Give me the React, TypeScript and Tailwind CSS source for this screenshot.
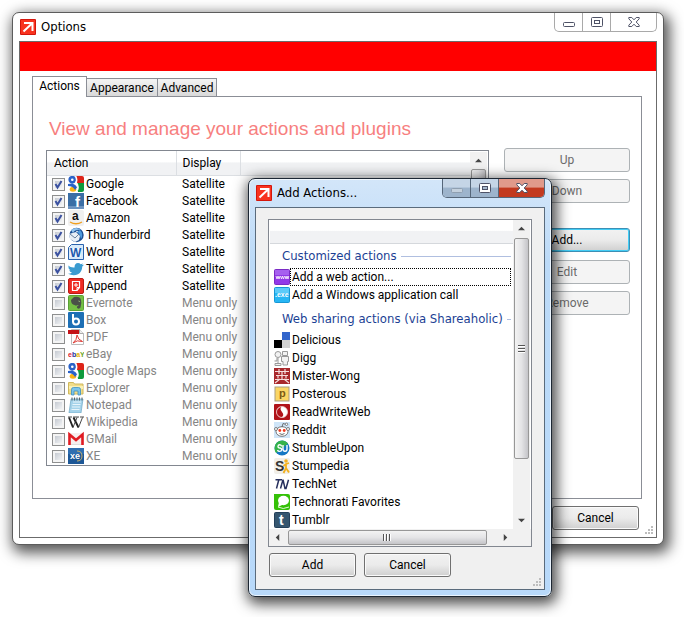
import type { ReactNode } from "react";
import clsx from "clsx";

type Action = { name: string; display: string; on?: boolean };

const ACTIONS: Action[] = [
  { name: "Google", display: "Satellite", on: true },
  { name: "Facebook", display: "Satellite", on: true },
  { name: "Amazon", display: "Satellite", on: true },
  { name: "Thunderbird", display: "Satellite", on: true },
  { name: "Word", display: "Satellite", on: true },
  { name: "Twitter", display: "Satellite", on: true },
  { name: "Append", display: "Satellite", on: true },
  { name: "Evernote", display: "Menu only" },
  { name: "Box", display: "Menu only" },
  { name: "PDF", display: "Menu only" },
  { name: "eBay", display: "Menu only" },
  { name: "Google Maps", display: "Menu only" },
  { name: "Explorer", display: "Menu only" },
  { name: "Notepad", display: "Menu only" },
  { name: "Wikipedia", display: "Menu only" },
  { name: "GMail", display: "Menu only" },
  { name: "XE", display: "Menu only" }
];

const CUSTOM = ["Add a web action...", "Add a Windows application call"];

const SHARING = [
  "Delicious",
  "Digg",
  "Mister-Wong",
  "Posterous",
  "ReadWriteWeb",
  "Reddit",
  "StumbleUpon",
  "Stumpedia",
  "TechNet",
  "Technorati Favorites",
  "Tumblr"
];

const sans = "Liberation Sans, Arial, sans-serif";

const googleIcon = (
  <>
    <path d="M7 0h7q2 0 2 2v5H9z" fill="#dd2419" />
    <path d="M9 7h7v7q0 2-2 2h-4z" fill="#0e9a3c" />
    <ellipse cx="5" cy="13.300" rx="3.300" ry="2.500" fill="#fbb516" />
    <circle cx="4.300" cy="3.800" r="2.600" fill="#fff" stroke="#2a62c8" strokeWidth="2.600" />
    <path d="M7.500 0q2 4 .5 6.500 3 2.500 1.500 7.500" fill="none" stroke="#fff" strokeWidth="1.600" />
    <path d="M0 8l4-.5q4 1 5 4L7 14Q5 10 0 10z" fill="#2a62c8" />
  </>
);

const ICONS: Record<string, ReactNode> = {
  Google: googleIcon,
  Facebook: (
    <>
      <rect width="16" height="16" fill="#3b6ea5" />
      <path d="M0 13h16v3H0z" fill="#6d93c0" />
      <text x="7" y="14" fontSize="15" fontWeight="bold" fontFamily={sans} fill="#fff">f</text>
    </>
  ),
  Amazon: (
    <>
      <rect width="16" height="16" rx="2" fill="#f0f0f0" />
      <text x="4" y="10" fontSize="12" fontWeight="bold" fontFamily={sans} fill="#111">a</text>
      <path d="M2 12q6 3.500 12 0" fill="none" stroke="#f0a020" strokeWidth="1.300" />
    </>
  ),
  Thunderbird: (
    <>
      <circle cx="8.500" cy="8" r="7.200" fill="#1c4f94" />
      <path d="M3 3q5-4 10 0-6-1-8 3z" fill="#8fc3ee" />
      <path d="M12 3q4 4 1 9-1-5-4-7z" fill="#4f9bdd" />
      <path d="M1 7l7-2 4 4-1 4-4 2-5-3z" fill="#e8eef5" />
      <path d="M2 7l5 4 4-4" fill="none" stroke="#69809b" />
      <circle cx="9" cy="4.500" r=".8" fill="#fff" />
    </>
  ),
  Word: (
    <>
      <path d="M3.500.5h12v15H.5v-12z" fill="#d8eafa" stroke="#2a62ad" />
      <path d="M2 4h11v9H2z" fill="#fff" opacity=".6" />
      <text x="2" y="13" fontSize="12" fontWeight="bold" fontFamily={sans} fill="#1e5bae">W</text>
    </>
  ),
  Twitter: (
    <path
      d="M0 4.500q3 2.500 6.500 2 0-4.500 3.500-4.500 1.700 0 2.700 1.200L15 2.500 14 4l2-.3-1.700 1.800Q14 11 10 13.300q-5 2-10-.6 2.500 0 4-1.200-2.200-.4-2.800-2.200h1.300Q.5 8.500.3 6l1.200.4Q0 5.500 0 4.500z"
      fill="#3a9bd0"
    />
  ),
  Append: (
    <>
      <rect x=".5" y=".5" width="15" height="15" rx="1.500" fill="#ee2a22" stroke="#b81c16" />
      <path d="M4.500 3.500h7v6l-2.500 3H4.500z" fill="none" stroke="#fff" strokeWidth="1.200" />
      <path d="M8 5v4M6 7h4" stroke="#fff" />
      <path d="M9 12.500v-3h3" fill="none" stroke="#fff" />
    </>
  ),
  Evernote: (
    <>
      <rect x=".5" y=".5" width="15" height="15" rx="1" fill="#74c044" stroke="#5aa136" />
      <path d="M3 5l3-3q6-1 7 3 1 3-.5 7.500-1 1.500-2.500 1-2-1-.5-2.500h1l-.5-1q-2 1-3.500 0Q3 9.500 3 5z" fill="#4a5148" />
      <path d="M10.500 6q1.200 0 1.300 1" fill="none" stroke="#a9d888" strokeWidth=".8" />
    </>
  ),
  Box: (
    <>
      <rect width="16" height="16" rx="1" fill="#1d6fb5" />
      <path d="M5 2v8" stroke="#fff" strokeWidth="2" />
      <circle cx="8" cy="9.500" r="3" fill="none" stroke="#fff" strokeWidth="2" />
    </>
  ),
  PDF: (
    <>
      <path d="M3.500.5h8l4 4v11h-12z" fill="#fff" stroke="#bbb" />
      <path d="M11.500.5v4h4" fill="#eee" stroke="#aaa" />
      <path d="M0 1h11v4H0z" fill="#c41217" />
      <path d="M5 14q4-3 4-8 1 5 5.500 6.500Q9 10.500 5 14z" fill="none" stroke="#dd3a34" />
    </>
  ),
  eBay: (
    <text x="0" y="11" fontSize="7" fontWeight="bold" fontFamily={sans} fill="#e0202c">
      e<tspan fill="#1e2f9a">b</tspan><tspan fill="#e9b100">a</tspan><tspan fill="#6ba51a">Y</tspan>
    </text>
  ),
  "Google Maps": googleIcon,
  Explorer: (
    <>
      <path d="M.5 2.500h5l1 1.500h8.500v10H.5z" fill="#f2dd88" stroke="#cfb85c" />
      <path d="M1 6h14v3H1z" fill="#faf0b4" />
      <path d="M3.500 15V9.500q0-2 2-2h5q2 0 2 2V15H10v-4H6v4z" fill="#7cc5ea" stroke="#3d91c4" strokeWidth=".8" />
    </>
  ),
  Notepad: (
    <>
      <path d="M3 2h12l-2 14H1z" fill="#a5d3ea" stroke="#6da7c6" strokeWidth=".7" />
      <path d="M5 5h8M4.500 7.500h8M4 10h8M3.500 12.500h8" stroke="#e8f5fb" />
      <path d="M4 .5v3M6.500.5v3M9 .5v3M11.500.5v3M14 .5v3" stroke="#59646b" />
    </>
  ),
  Wikipedia: (
    <>
      <path d="M1 3.500l4 10M5.500 3.500l5 10" stroke="#222" strokeWidth="1.900" fill="none" />
      <path d="M5 13.500l4-10M10.500 13.500l4-10M0 3h4M5 3h6M12 3h4" stroke="#333" strokeWidth=".9" fill="none" />
    </>
  ),
  GMail: (
    <>
      <rect y="2" width="16" height="12" rx="1" fill="#f6eeee" />
      <path d="M1.500 14V3.500L8 9l6.500-5.500V14" fill="none" stroke="#e01b22" strokeWidth="2.600" />
      <path d="M3 13.500h10" stroke="#ddd" />
    </>
  ),
  XE: (
    <>
      <rect width="16" height="16" fill="#1d5796" />
      <path d="M0 0h16v6H0z" fill="#2f6eb0" />
      <path d="M9 3q5 0 5 5t-5 5" fill="none" stroke="#c9b06a" />
      <text x="2" y="11" fontSize="9" fontWeight="bold" fontFamily={sans} fill="#fff">xe</text>
    </>
  ),
  "Add a web action...": (
    <>
      <rect x=".5" y=".5" width="15" height="15" rx="1" fill="#9238e8" stroke="#7a2bc4" />
      <path d="M1 1h14v5H1z" fill="#a660ef" />
      <path d="M2 7l1 3 1-3 1 3 1-3M6.500 7l1 3 1-3 1 3 1-3M11 7l1 3 1-3 1 3 .7-3" fill="none" stroke="#fff" strokeWidth=".8" />
    </>
  ),
  "Add a Windows application call": (
    <>
      <rect x=".5" y=".5" width="15" height="15" rx="1" fill="#27b6f4" stroke="#1797d4" />
      <path d="M1 1h14v5H1z" fill="#5bcbf9" />
      <text x="1" y="10" fontSize="7" fontWeight="bold" fontFamily={sans} fill="#fff">.exe</text>
    </>
  ),
  Delicious: (
    <>
      <path d="M0 0h8v8H0z" fill="#fff" />
      <path d="M8 0h8v8H8z" fill="#3366cc" />
      <path d="M0 8h8v8H0z" fill="#000" />
      <path d="M8 8h8v8H8z" fill="#d2d2d2" />
    </>
  ),
  Digg: (
    <g fill="#f2f2f2" stroke="#999">
      <circle cx="4" cy="4.500" r="3" />
      <path d="M3 8v3H.5M4 8v5M1 15.500h6v-2H1zM8.500 1.500h5v4h-5zM7.500 6.500h7v5h-1v3.500h-4.500v-3.500h-1.500z" />
    </g>
  ),
  "Mister-Wong": (
    <>
      <rect width="16" height="16" fill="#a8282c" />
      <path
        d="M5 1v5M11 1v5M1 3.500h14M2 7.500h12M4 7.500v3M12 7.500v3M1 11.500h14M1 15l5-4M15 15l-5-4M8 4v7"
        stroke="#f6dede"
        strokeWidth="1.200"
        fill="none"
      />
    </>
  ),
  Posterous: (
    <>
      <rect x="1" y="1" width="14" height="14" fill="#fbd665" stroke="#a99d80" />
      <text x="5" y="11" fontSize="11" fontWeight="bold" fontFamily={sans} fill="#7a5a14">p</text>
    </>
  ),
  ReadWriteWeb: (
    <>
      <rect width="16" height="16" rx="1" fill="#b0131a" />
      <circle cx="8" cy="8" r="5.500" fill="#fff" />
      <path d="M8 2.500q-3 2 0 5.500t-1 5.500Q2.500 12 2.500 8T8 2.500z" fill="#b0131a" />
      <circle cx="8" cy="8" r="5.500" fill="none" stroke="#f3d0d0" strokeWidth=".8" />
    </>
  ),
  Reddit: (
    <>
      <rect width="16" height="16" fill="#cfe5f8" />
      <ellipse cx="8" cy="9.500" rx="6" ry="4.800" fill="#fff" stroke="#555" strokeWidth=".8" />
      <circle cx="2" cy="7" r="1.500" fill="#fff" stroke="#555" strokeWidth=".7" />
      <circle cx="14" cy="7" r="1.500" fill="#fff" stroke="#555" strokeWidth=".7" />
      <path d="M8 5l1-3.500 3.500 1" fill="none" stroke="#555" strokeWidth=".8" />
      <circle cx="12.500" cy="2.300" r="1.200" fill="#fff" stroke="#555" strokeWidth=".7" />
      <circle cx="5.800" cy="8.500" r="1.400" fill="#f03a20" />
      <circle cx="10.200" cy="8.500" r="1.400" fill="#f03a20" />
      <path d="M5.500 11.500q2.500 2 5 0" fill="none" stroke="#444" strokeWidth=".8" />
    </>
  ),
  StumbleUpon: (
    <>
      <circle cx="8" cy="8" r="7.500" fill="#1477c4" />
      <path d="M1.500 4.500A7.500 7.500 0 0 1 14 3.500L2 13Q-.5 9 1.500 4.500z" fill="#35b34a" />
      <path d="M7.500 6.500q0-1.800-1.700-1.800T4 6.300t1.800 1.700 1.800 1.700-1.800 1.700T3.500 10M9 5v4q0 2.200 2 2.200t2-2.200V5" fill="none" stroke="#fff" strokeWidth="1.400" />
    </>
  ),
  Stumpedia: (
    <>
      <rect width="16" height="16" rx="2" fill="#f1efe9" />
      <text x="1" y="13" fontSize="14" fontWeight="bold" fontFamily={sans} fill="#333">S</text>
      <circle cx="12" cy="3" r="1.800" fill="#f2b01e" />
      <path d="M9.500 8l2.500-2 3-1M12 6v4l-2.500 5M12 10l3 4.500" fill="none" stroke="#f2b01e" strokeWidth="1.800" />
    </>
  ),
  TechNet: (
    <path
      d="M1.500 3.700h6.500M4.800 3.700L2.500 12.500M6.500 12.500L9 3.700l2 8.800h1l2.500-8.800"
      fill="none"
      stroke="#27305e"
      strokeWidth="1.500"
    />
  ),
  "Technorati Favorites": (
    <>
      <rect width="16" height="16" rx="2" fill="#35c108" />
      <ellipse cx="9.500" cy="6.500" rx="5.500" ry="4.700" fill="#fff" />
      <path d="M5 8l-1 5 5-2.500z" fill="#fff" />
      <path d="M0 0h6L3 4 4 9 0 11z" fill="#35c108" />
      <path d="M4 13q5 3 11 0" stroke="#e2f7d9" fill="none" />
    </>
  ),
  Tumblr: (
    <>
      <rect x=".5" y=".5" width="15" height="15" rx="1" fill="#35566f" stroke="#24405a" />
      <text x="5" y="13" fontSize="14" fontWeight="bold" fontFamily={sans} fill="#fff">t</text>
    </>
  )
};

function Icon({ name }: { name: string }) {
  return (
    <svg viewBox="0 0 16 16" className="block h-4 w-4 shrink-0" aria-hidden="true">
      {ICONS[name]}
    </svg>
  );
}

function AppLogo() {
  return (
    <svg viewBox="0 0 16 16" className="h-4 w-4 shrink-0" aria-hidden="true">
      <rect width="16" height="16" rx="1" fill="#d4160c" />
      <rect x="1" y="1" width="14" height="14" fill="#f8331f" />
      <path d="M4 4h8.500v8M12 4.500L3.500 12.500" fill="none" stroke="#fff" strokeWidth="2" />
    </svg>
  );
}

function CaptionButtons({ active }: { active?: boolean }) {
  const edge = active ? "border-[#56677a]" : "border-[#a9a9a9]";
  const glass = active && "bg-linear-to-b from-[#c5d5e6] from-45% to-[#9db4cc] to-50%";
  return (
    <div className={clsx("flex h-[19px] overflow-hidden rounded-b-[5px] border border-t-0", edge)}>
      <button aria-label="Minimize" className={clsx("grid w-[27px] place-items-center", glass)}>
        <svg viewBox="0 0 12 10" className="h-[10px] w-3">
          <rect x=".5" y="5.500" width="11" height="4" rx="1" fill={active ? "#c3d0dd" : "#fff"} stroke={active ? "#8f9fb0" : "#4e5266"} />
        </svg>
      </button>
      <button aria-label="Maximize" className={clsx("grid w-7 place-items-center border-l", edge, glass)}>
        <svg viewBox="0 0 12 10" className="h-[10px] w-3">
          <rect x=".5" y=".5" width="11" height="9" rx="1" fill="#fff" stroke="#4e5266" />
          <rect x="3.500" y="3.500" width="5" height="3" fill={active ? "#a7b9cc" : "#fff"} stroke="#4e5266" />
        </svg>
      </button>
      <button
        aria-label="Close"
        className={clsx(
          "grid w-[46px] place-items-center border-l",
          edge,
          active && "bg-linear-to-b from-[#e09a8b] from-45% to-[#c23a20] to-50%"
        )}
      >
        <svg viewBox="0 0 12 10" className="h-[10px] w-3">
          <path
            d="M.8.500h3L6 2.800 8.200.5h3v1.300L8.200 5l3 3.200v1.300h-3L6 7.200 3.800 9.500h-3V8.200l3-3.200-3-3.200z"
            fill="#fff"
            stroke="#4e5266"
          />
        </svg>
      </button>
    </div>
  );
}

type ButtonProps = { children: ReactNode; className?: string; disabled?: boolean; focus?: boolean };

function PushButton({ children, className, disabled, focus }: ButtonProps) {
  return (
    <button
      disabled={disabled}
      className={clsx(
        "h-6 rounded-[3px] border text-xs",
        disabled && "border-[#adb2b5] bg-[#f4f4f4] text-[#6b6b6b]",
        !disabled && "bg-linear-to-b from-[#f2f2f2] from-0% via-[#ebebeb] via-50% to-[#cfcfcf] text-black",
        !disabled && (focus ? "border-[#3c8fb5] inset-ring inset-ring-[#43cdf5]" : "border-[#707070] inset-ring inset-ring-[#fafafa]"),
        className
      )}
    >
      {children}
    </button>
  );
}

function Arrow({ dir }: { dir: "up" | "down" | "left" | "right" }) {
  const d = { up: "M0 6l4-4 4 4z", down: "M0 2l4 4 4-4z", left: "M6 0L2 4l4 4z", right: "M2 0l4 4-4 4z" }[dir];
  return (
    <button aria-label={`Scroll ${dir}`} className="grid h-[17px] w-[17px] shrink-0 place-items-center">
      <svg viewBox="0 0 8 8" className="h-[7px] w-[7px]">
        <path d={d} fill="#444" />
      </svg>
    </button>
  );
}

function VScroll({ thumb }: { thumb: string }) {
  return (
    <div className="flex w-[17px] shrink-0 flex-col bg-[#f1f1f1]">
      <Arrow dir="up" />
      <div className="flex-1">
        <div
          className={clsx(
            "mx-px grid place-items-center rounded-[2px] border border-[#979797] bg-linear-to-r from-[#f3f3f3] via-[#e4e4e6] to-[#c4c4c8]",
            thumb
          )}
        >
          <svg viewBox="0 0 7 8" className="h-2 w-[7px]">
            <path d="M0 .5h7M0 3.500h7M0 6.500h7" stroke="#555" />
            <path d="M0 1.500h7M0 4.500h7M0 7.500h7" stroke="#fff" />
          </svg>
        </div>
      </div>
      <Arrow dir="down" />
    </div>
  );
}

function HScroll() {
  return (
    <div className="flex h-[17px] bg-[#f1f1f1] pr-[17px]">
      <Arrow dir="left" />
      <div className="flex-1 py-px pl-[2px]">
        <div className="grid h-[15px] w-[95%] place-items-center rounded-[2px] border border-[#979797] bg-linear-to-b from-[#f3f3f3] via-[#e4e4e6] to-[#c4c4c8]">
          <svg viewBox="0 0 8 7" className="h-[7px] w-2">
            <path d="M.5 0v7M3.500 0v7M6.500 0v7" stroke="#555" />
            <path d="M1.500 0v7M4.500 0v7M7.500 0v7" stroke="#fff" />
          </svg>
        </div>
      </div>
      <Arrow dir="right" />
    </div>
  );
}

function Grip() {
  return (
    <svg viewBox="0 0 9 9" className="absolute right-0.5 bottom-0.5 h-[9px] w-[9px]" aria-hidden="true">
      <path d="M6 0h2v2H6zM3 3h2v2H3zM6 3h2v2H6zM0 6h2v2H0zM3 6h2v2H3zM6 6h2v2H6z" fill="#bdbdbd" />
    </svg>
  );
}

function ActionTable() {
  return (
    <div className="mt-0.5 flex min-w-0 flex-1 border border-[#828790] bg-white">
      <table className="w-full table-fixed border-collapse text-left text-xs">
        <thead>
          <tr className="h-6 bg-linear-to-b from-white from-45% to-[#f1f2f4] to-50%">
            <th className="w-[129px] border-r border-b border-[#dcdfe3] p-0 pl-[7px] font-normal">Action</th>
            <th className="w-16 border-r border-b border-[#dcdfe3] p-0 pl-1.5 font-normal">Display</th>
            <th className="border-b border-[#dcdfe3] p-0" />
          </tr>
        </thead>
        <tbody>
          {ACTIONS.map((a) => (
            <tr key={a.name} className={clsx("h-[17px]", a.on ? "text-black" : "text-[#858585]")}>
              <td className="p-0 pl-[5px]">
                <label className="flex h-[17px] items-center">
                  <span className="relative mr-[3px] h-[13px] w-[13px] shrink-0">
                    <input
                      type="checkbox"
                      defaultChecked={a.on}
                      className="peer block h-[13px] w-[13px] appearance-none border border-[#8e8f8f] bg-linear-to-br from-[#b9bfc8] to-[#ffffff] inset-ring-2 inset-ring-[#f4f4f4]"
                    />
                    <svg viewBox="0 0 13 13" className="pointer-events-none invisible absolute inset-0 peer-checked:visible">
                      <path d="M3.500 6l2 3.500L9.500 3" fill="none" stroke="#3b51a0" strokeWidth="2" />
                    </svg>
                  </span>
                  <Icon name={a.name} />
                  <span className="ml-0.5 leading-4 whitespace-nowrap">{a.name}</span>
                </label>
              </td>
              <td className="p-0 pl-1.5 leading-4 whitespace-nowrap">{a.display}</td>
              <td />
            </tr>
          ))}
        </tbody>
      </table>
      <div className="flex py-px pr-px">
        <VScroll thumb="h-[180px]" />
      </div>
    </div>
  );
}

function OptionsWindow() {
  return (
    <section className="mt-3 mr-5 ml-3 rounded-[7px] border border-[#5c5c5c] bg-white px-1.5 pb-1.5 shadow-[3px_5px_14px_3px_rgba(0,0,0,0.65)]">
      <header className="flex h-7 justify-between">
        <div className="flex items-center gap-[5px] pl-px">
          <AppLogo />
          <h1 className="font-['DejaVu_Sans_Condensed'] text-[13px] leading-4">Options</h1>
        </div>
        <CaptionButtons />
      </header>

      <div className="relative border border-[#6b6b6b] pb-[7px]">
        <div className="h-[29px] bg-[#ff0000]" />
        <div className="pt-[5px] pr-[14px] pl-3">
          <div role="tablist" className="flex items-end text-xs">
            <button role="tab" aria-selected="true" className="relative z-1 -mb-px h-[21px] w-[55px] border border-b-0 border-[#8b8e96] bg-white pb-0.5">
              Actions
            </button>
            <button role="tab" className="h-[18px] w-[71px] border border-b-0 border-l-0 border-[#8b8e96] bg-linear-to-b from-[#f4f4f4] to-[#d9d9d9]">
              Appearance
            </button>
            <button role="tab" className="h-[18px] w-[59px] border border-b-0 border-l-0 border-[#8b8e96] bg-linear-to-b from-[#f4f4f4] to-[#d9d9d9]">
              Advanced
            </button>
          </div>

          <div className="border border-[#8b8e96] pt-5 pr-[11px] pb-8 pl-[13px]">
            <h2 className="pl-[3px] font-['Liberation_Sans',Arial,sans-serif] text-[19px] leading-6 text-[#f77f7f]">
              View and manage your actions and plugins
            </h2>
            <div className="mt-[7px] flex gap-[15px]">
              <ActionTable />
              <div className="flex w-[126px] shrink-0 flex-col gap-[7px]">
                <PushButton disabled>Up</PushButton>
                <PushButton disabled>Down</PushButton>
                <PushButton focus className="mt-[18px]">Add...</PushButton>
                <PushButton disabled className="mt-px">Edit</PushButton>
                <PushButton disabled>Remove</PushButton>
              </div>
            </div>
          </div>
        </div>

        <footer className="mt-[7px] flex justify-end pr-[17px]">
          <PushButton className="w-[87px]">Cancel</PushButton>
        </footer>
        <Grip />
      </div>
    </section>
  );
}

function GroupHeading({ children }: { children: ReactNode }) {
  return (
    <h3 className="flex h-full items-center gap-1 font-['DejaVu_Sans_Condensed'] text-[13px] leading-4 whitespace-nowrap text-[#1c3f94]">
      {children}
      <span className="h-px flex-1 bg-[#b0bfe0]" />
    </h3>
  );
}

function AddItem({ name, selected }: { name: string; selected?: boolean }) {
  return (
    <li className="flex h-[18px] items-center pl-[5px] text-xs whitespace-nowrap">
      <Icon name={name} />
      <button
        className={clsx(
          "flex-1 border border-dotted py-px pl-px text-left leading-[14px]",
          selected ? "border-black" : "border-transparent"
        )}
      >
        {name}
      </button>
    </li>
  );
}

function AddActionsDialog() {
  return (
    <section
      role="dialog"
      aria-label="Add Actions..."
      className="absolute top-[178px] left-[248px] w-[304px] rounded-[7px] border border-[#1d2733] bg-linear-to-b from-[#d3e6f9] via-[#bcdaf8] via-20% to-[#b8d9fa] px-1.5 pb-1.5 shadow-[2px_4px_14px_3px_rgba(0,0,0,0.7)] inset-ring inset-ring-white/70"
    >
      <header className="flex h-7 justify-between">
        <div className="flex items-center gap-[5px] pl-px">
          <AppLogo />
          <h2 className="font-['DejaVu_Sans_Condensed'] text-[13px] leading-4">Add Actions...</h2>
        </div>
        <CaptionButtons active />
      </header>

      <div className="relative border border-[#5a6b7c] bg-[#f0f0f0] px-3 pt-[11px] pb-3">
        <div className="border border-[#828790] bg-white">
          <div className="flex pr-px">
            <div className="min-w-0 flex-1">
              <div className="ml-px h-6 border-b border-[#d5d8dc] bg-linear-to-b from-white from-45% to-[#f1f2f4] to-50%" />
              <div className="h-6 pr-0.5 pl-[13px]">
                <GroupHeading>Customized actions</GroupHeading>
              </div>
              <ul className="pr-0.5">
                {CUSTOM.map((name, i) => (
                  <AddItem key={name} name={name} selected={i === 0} />
                ))}
              </ul>
              <div className="h-[27px] pt-[3px] pr-0.5 pl-[13px]">
                <GroupHeading>Web sharing actions (via Shareaholic)</GroupHeading>
              </div>
              <ul className="pr-0.5">
                {SHARING.map((name) => (
                  <AddItem key={name} name={name} />
                ))}
              </ul>
            </div>
            <VScroll thumb="mt-px h-[221px]" />
          </div>
          <HScroll />
        </div>

        <footer className="mt-1.5 flex gap-2 pl-px">
          <PushButton className="w-[87px]">Add</PushButton>
          <PushButton className="w-[87px]">Cancel</PushButton>
        </footer>
        <Grip />
      </div>
    </section>
  );
}

export default function App() {
  return (
    <main className="relative flow-root min-h-screen overflow-hidden bg-white font-[Roboto,sans-serif] text-black">
      <OptionsWindow />
      <AddActionsDialog />
    </main>
  );
}
